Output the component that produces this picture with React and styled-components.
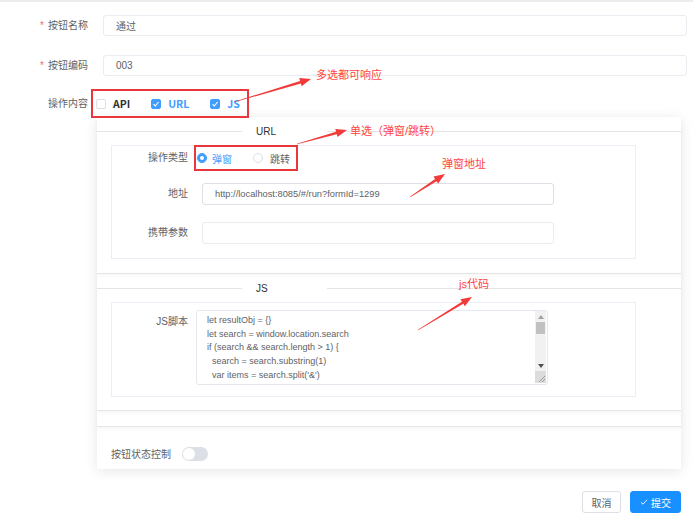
import React from "react";
import styled, { createGlobalStyle } from "styled-components";

const Global = createGlobalStyle`
  html, body { margin: 0; padding: 0; background: #fff; }
  body { font-family: "Liberation Sans", "Noto Sans CJK SC", sans-serif; }
  * { box-sizing: border-box; }
`;

const Page = styled.div`
  position: relative;
  width: 693px;
  height: 516px;
  overflow: hidden;
  background: #fff;
  border-top: 2px solid #ececec;
  padding-top: 13px;
`;

const FormRow = styled.div`
  display: flex;
  align-items: center;
  height: 21px;
  margin-bottom: ${(p) => p.$mb || 0}px;
`;

const Label = styled.div`
  width: ${(p) => p.$w || 88}px;
  flex-shrink: 0;
  text-align: right;
  font-size: 10px;
  line-height: ${(p) => p.$lh || 14}px;
  color: #606266;
  white-space: nowrap;
`;

const Star = styled.span`
  color: #f56c6c;
  margin-right: 4px;
`;

const Input = styled.div`
  margin-left: ${(p) => p.$ml || 15}px;
  width: ${(p) => p.$w || 584}px;
  height: ${(p) => p.$h || 21}px;
  border: 1px solid ${(p) => (p.$dark ? "#dcdfe6" : "#e9ecf1")};
  border-radius: 3px;
  padding-left: ${(p) => p.$pl || 12}px;
  display: flex;
  align-items: center;
  font-size: ${(p) => p.$fs || 10}px;
  color: #606266;
  background: #fff;
`;

const OptionRow = styled.div`
  display: flex;
  align-items: center;
  margin-top: 13px;
  position: relative;
  z-index: 2;
`;

const RedBox = styled.div`
  display: flex;
  align-items: center;
  height: ${(p) => p.$h}px;
  margin-left: ${(p) => p.$ml}px;
  padding: 0 ${(p) => p.$pr}px 0 ${(p) => p.$pl}px;
  border: 2px solid #e8383d;
  gap: 21px;
`;

const Choice = styled.div`
  display: flex;
  align-items: center;
  gap: ${(p) => p.$gap || 7}px;
  font-family: ${(p) => (p.$latin ? '"Noto Sans CJK SC", sans-serif' : "inherit")};
  font-size: ${(p) => p.$fs || 10}px;
  font-weight: ${(p) => p.$fw || 400};
  color: ${(p) => (p.$on ? "#409eff" : p.$muted ? "#606266" : "#303133")};
`;

const Box = styled.span`
  width: 10px;
  height: 10px;
  border-radius: 2px;
  display: flex;
  align-items: center;
  justify-content: center;
  border: 1px solid ${(p) => (p.$on ? "#409eff" : "#dcdfe6")};
  background: ${(p) => (p.$on ? "#409eff" : "#fff")};
`;

const Dot = styled.span`
  width: 10px;
  height: 10px;
  border-radius: 50%;
  display: flex;
  align-items: center;
  justify-content: center;
  border: 1px solid ${(p) => (p.$on ? "#409eff" : "#dcdfe6")};
  background: ${(p) => (p.$on ? "#409eff" : "#fff")};
  &::after {
    content: "";
    width: 4px;
    height: 4px;
    border-radius: 50%;
    background: ${(p) => (p.$on ? "#fff" : "transparent")};
  }
`;

const Card = styled.div`
  margin-left: 97px;
  width: 584px;
  margin-top: -1px;
  background: #fff;
  box-shadow: 0 2px 12px rgba(0, 0, 0, 0.1);
  position: relative;
  z-index: 1;
`;

const Section = styled.div`
  padding-bottom: ${(p) => p.$pb || 0}px;
  height: ${(p) => (p.$h ? `${p.$h}px` : "auto")};
  border-bottom: ${(p) => (p.$last ? "none" : "1px solid #e6e6e6")};
  box-shadow: ${(p) => (p.$last ? "none" : "0 2px 5px rgba(0,0,0,0.04)")};
  position: relative;
`;

const Divider = styled.div`
  display: flex;
  align-items: center;
  height: 28px;
`;

const Line = styled.div`
  height: 1px;
  background: #e4e4e4;
  width: ${(p) => (p.$w ? `${p.$w}px` : "auto")};
  flex: ${(p) => (p.$w ? "none" : 1)};
`;

const DividerTitle = styled.div`
  width: 85px;
  padding-left: 14px;
  font-size: 10px;
  color: #303133;
`;

const Inner = styled.div`
  margin: 0 45px 0 14px;
  border: 1px solid #ebeef5;
  padding: ${(p) => p.$pad};
`;

const InnerRow = styled.div`
  display: flex;
  align-items: ${(p) => (p.$top ? "flex-start" : "center")};
  height: ${(p) => (p.$h ? `${p.$h}px` : "auto")};
  margin-top: ${(p) => p.$mt || 0}px;
`;

const TextArea = styled.div`
  margin-left: 8px;
  width: 352px;
  height: 75px;
  border: 1px solid #e4e7ed;
  border-radius: 3px;
  display: flex;
  overflow: hidden;
`;

const Code = styled.pre`
  flex: 1;
  margin: 0;
  padding: 3px 0 0 10px;
  font-family: "Liberation Sans", "Noto Sans CJK SC", sans-serif;
  font-size: 9px;
  line-height: 13.7px;
  color: #606266;
  white-space: pre;
  overflow: hidden;
`;

const Scroll = styled.div`
  width: 11px;
  margin: 0 1px 1px 0;
  background: #f1f1f1;
  display: flex;
  flex-direction: column;
`;

const ScrollBtn = styled.div`
  height: 11px;
  display: flex;
  align-items: center;
  justify-content: center;
`;

const Thumb = styled.div`
  height: 12px;
  margin: 0 1px;
  background: #c1c1c1;
`;

const Fill = styled.div`
  flex: 1;
`;

const Corner = styled.div`
  height: 12px;
  background: #dcdcdc;
  display: flex;
  align-items: flex-end;
  justify-content: flex-end;
`;

const Footer = styled.div`
  padding: 19px 14px 8px;
  display: flex;
  align-items: center;
  gap: 11px;
`;

const Plain = styled.span`
  font-size: 10px;
  color: #606266;
`;

const Switch = styled.span`
  width: 26px;
  height: 14px;
  border-radius: 7px;
  background: #dcdfe6;
  padding: 1px;
  display: flex;
  &::before {
    content: "";
    width: 12px;
    height: 12px;
    border-radius: 50%;
    background: #fff;
  }
`;

const Actions = styled.div`
  display: flex;
  justify-content: flex-end;
  gap: 9px;
  padding-right: 12px;
  margin-top: 22px;
`;

const Button = styled.div`
  height: 22px;
  width: ${(p) => p.$w}px;
  border-radius: 3px;
  border: 1px solid ${(p) => (p.$primary ? "#1890ff" : "#dcdfe6")};
  background: ${(p) => (p.$primary ? "#1890ff" : "#fff")};
  color: ${(p) => (p.$primary ? "#fff" : "#606266")};
  font-size: 10px;
  display: flex;
  align-items: center;
  justify-content: center;
  gap: 3px;
`;

const Overlay = styled.svg`
  position: absolute;
  left: 0;
  top: 0;
  pointer-events: none;
  z-index: 5;
`;

const Note = styled.span`
  position: absolute;
  left: ${(p) => p.$x}px;
  top: ${(p) => p.$y}px;
  font-size: 11px;
  line-height: 14px;
  color: #ff4444;
  white-space: nowrap;
  z-index: 5;
`;

const Check = () => (
  <svg width="8" height="8" viewBox="0 0 8 8">
    <path d="M1.5 4.2 L3.3 6 L6.6 2" fill="none" stroke="#fff" strokeWidth="1.1" />
  </svg>
);

function arrowPoints(x1, y1, x2, y2) {
  const dx = x2 - x1;
  const dy = y2 - y1;
  const len = Math.hypot(dx, dy);
  const ux = dx / len;
  const uy = dy / len;
  const nx = -uy;
  const ny = ux;
  const h = 11;
  const bx = x2 - ux * h;
  const by = y2 - uy * h;
  const pts = [
    [x1 + nx * 0.3, y1 + ny * 0.3],
    [bx + nx * 1.3, by + ny * 1.3],
    [bx + nx * 4.2, by + ny * 4.2],
    [x2, y2],
    [bx - nx * 4.2, by - ny * 4.2],
    [bx - nx * 1.3, by - ny * 1.3],
    [x1 - nx * 0.3, y1 - ny * 0.3],
  ];
  return pts.map((p) => p.join(",")).join(" ");
}

const arrows = [
  [234, 100, 311, 77],
  [297, 142, 347, 128],
  [410, 195, 445, 172],
  [418, 328, 472, 295],
];

const code = `let resultObj = {}
let search = window.location.search
if (search && search.length > 1) {
  search = search.substring(1)
  var items = search.split('&')`;

export default function App() {
  return (
    <>
      <Global />
      <Page>
        <FormRow $mb={19}>
          <Label>
            <Star>*</Star>按钮名称
          </Label>
          <Input>通过</Input>
        </FormRow>
        <FormRow>
          <Label>
            <Star>*</Star>按钮编码
          </Label>
          <Input>003</Input>
        </FormRow>
        <OptionRow>
          <Label>操作内容</Label>
          <RedBox $h={29} $ml={3} $pl={3} $pr={7}>
            <Choice $latin $fw={600} $fs={10.5}>
              <Box />
              API
            </Choice>
            <Choice $latin $fw={600} $fs={10.5} $on>
              <Box $on>
                <Check />
              </Box>
              URL
            </Choice>
            <Choice $latin $fw={600} $fs={10.5} $on>
              <Box $on>
                <Check />
              </Box>
              JS
            </Choice>
          </RedBox>
        </OptionRow>

        <Card>
          <Section $pb={14}>
            <Divider>
              <Line $w={145} />
              <DividerTitle>URL</DividerTitle>
              <Line />
            </Divider>
            <Inner $pad="0 0 14px 0">
              <InnerRow $h={26} $mt={-1}>
                <Label $w={76}>操作类型</Label>
                <RedBox $h={26} $ml={6} $pl={1} $pr={6}>
                  <Choice $on $gap={5}>
                    <Dot $on />
                    弹窗
                  </Choice>
                  <Choice $muted $gap={7}>
                    <Dot />
                    跳转
                  </Choice>
                </RedBox>
              </InnerRow>
              <InnerRow $mt={12}>
                <Label $w={76}>地址</Label>
                <Input $ml={14} $w={352} $h={22} $fs={9.3} $dark>
                  http://localhost:8085/#/run?formId=1299
                </Input>
              </InnerRow>
              <InnerRow $mt={17}>
                <Label $w={76}>携带参数</Label>
                <Input $ml={14} $w={352} $h={22} />
              </InnerRow>
            </Inner>
          </Section>

          <Section $pb={13}>
            <Divider>
              <Line $w={145} />
              <DividerTitle>JS</DividerTitle>
              <Line />
            </Divider>
            <Inner $pad="7px 0 11px 0">
              <InnerRow $top>
                <Label $w={76} $lh={24}>
                  JS脚本
                </Label>
                <TextArea>
                  <Code>{code}</Code>
                  <Scroll>
                    <ScrollBtn>
                      <svg width="6" height="4" viewBox="0 0 6 4">
                        <path d="M0 4 L3 0 L6 4 Z" fill="#a3a3a3" />
                      </svg>
                    </ScrollBtn>
                    <Thumb />
                    <Fill />
                    <ScrollBtn>
                      <svg width="6" height="4" viewBox="0 0 6 4">
                        <path d="M0 0 L6 0 L3 4 Z" fill="#505050" />
                      </svg>
                    </ScrollBtn>
                    <Corner>
                      <svg width="9" height="9" viewBox="0 0 9 9">
                        <path d="M8 2 L2 8 M8 5 L5 8" stroke="#8a8a8a" strokeWidth="0.8" />
                      </svg>
                    </Corner>
                  </Scroll>
                </TextArea>
              </InnerRow>
            </Inner>
          </Section>

          <Section $h={16} />

          <Section $last>
            <Footer>
              <Plain>按钮状态控制</Plain>
              <Switch />
            </Footer>
          </Section>
        </Card>

        <Actions>
          <Button $w={39}>取消</Button>
          <Button $w={51} $primary>
            <svg width="8" height="8" viewBox="0 0 8 8">
              <path d="M1 4.3 L3 6.2 L7 1.8" fill="none" stroke="#fff" strokeWidth="0.9" />
            </svg>
            提交
          </Button>
        </Actions>

        <Overlay width="693" height="516" viewBox="0 0 693 516">
          {arrows.map((a, i) => (
            <polygon key={i} points={arrowPoints(...a)} fill="#f23a3a" />
          ))}
        </Overlay>
        <Note $x={316} $y={66}>多选都可响应</Note>
        <Note $x={350} $y={122}>单选（弹窗/跳转）</Note>
        <Note $x={442} $y={155}>弹窗地址</Note>
        <Note $x={459} $y={275}>js代码</Note>
      </Page>
    </>
  );
}
